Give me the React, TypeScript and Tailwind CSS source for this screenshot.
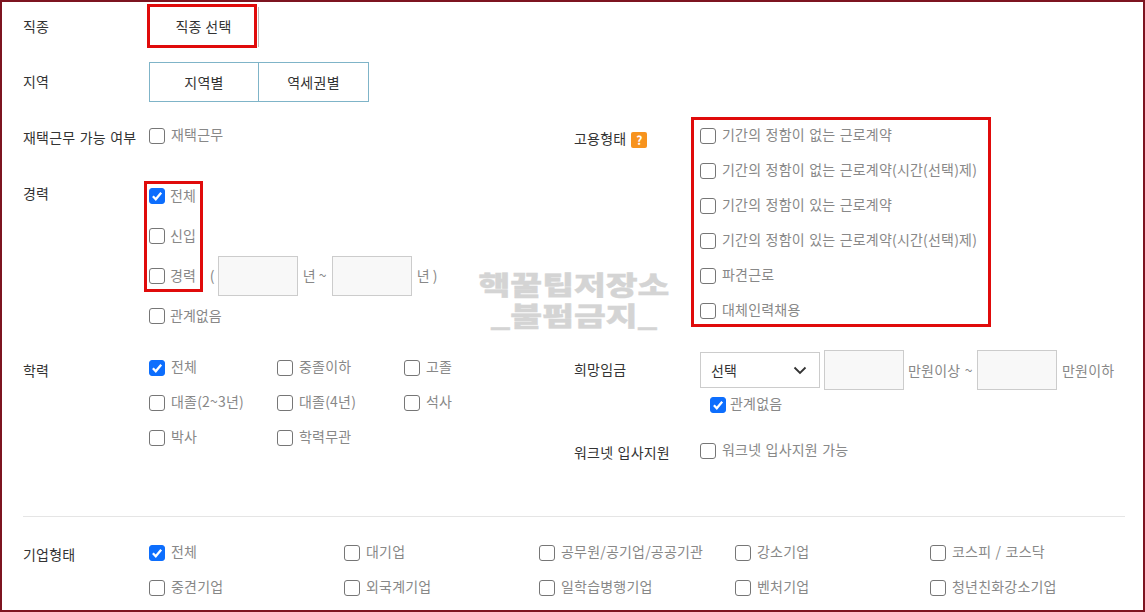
import React from 'react';

const FONT = "font-['Noto_Sans_CJK_KR','Noto_Sans',sans-serif]";

const Check = ({ label, checked = false, className = '', tight = false }: { label: string; checked?: boolean; className?: string; tight?: boolean }) => (
  <div className={`flex h-4 items-center ${className}`}>
    <span className={`flex h-4 w-4 shrink-0 items-center justify-center rounded-[3px] border ${checked ? 'border-[#0d6efd] bg-[#0d6efd]' : 'border-[#767676] bg-white'}`}>
      {checked && (
        <svg viewBox="0 0 16 16" className="h-4 w-4" fill="none">
          <path d="M3.3 8.3 6.6 11.8 12.8 4.4" stroke="white" strokeWidth="2.6" />
        </svg>
      )}
    </span>
    <span className={`whitespace-nowrap text-[14px] text-[#888] ${tight ? 'ml-[5px] -mt-[1px]' : 'ml-[6px] -mt-[3px] tracking-[0.2px] [word-spacing:1px]'}`}>{label}</span>
  </div>
);

const Label = ({ children, className = '' }: { children: React.ReactNode; className?: string }) => (
  <div className={`w-[126px] shrink-0 whitespace-nowrap text-[14px] leading-5 tracking-[0.2px] text-[#333] [word-spacing:1px] ${className}`}>{children}</div>
);

const Box = ({ className = '' }: { className?: string }) => (
  <span className={`block h-10 w-20 shrink-0 border border-[#ccc] bg-[#f8f8f8] ${className}`} />
);

const employment = [
  '기간의 정함이 없는 근로계약',
  '기간의 정함이 없는 근로계약(시간(선택)제)',
  '기간의 정함이 있는 근로계약',
  '기간의 정함이 있는 근로계약(시간(선택)제)',
  '파견근로',
  '대체인력채용',
];

const education: [string, boolean][] = [
  ['전체', true],
  ['중졸이하', false],
  ['고졸', false],
  ['대졸(2~3년)', false],
  ['대졸(4년)', false],
  ['석사', false],
  ['박사', false],
  ['학력무관', false],
];

const company: [string, boolean][] = [
  ['전체', true],
  ['대기업', false],
  ['공무원/공기업/공공기관', false],
  ['강소기업', false],
  ['코스피 / 코스닥', false],
  ['중견기업', false],
  ['외국계기업', false],
  ['일학습병행기업', false],
  ['벤처기업', false],
  ['청년친화강소기업', false],
];

export default function App() {
  return (
    <div className={`relative h-[612px] w-[1145px] overflow-hidden border-2 border-[#7d1420] bg-white pl-[21px] pr-[18px] pt-[5px] ${FONT}`}>
      {/* job type */}
      <div className="flex items-center">
        <Label className="-mt-[3px]">직종</Label>
        <div className="relative flex h-10 w-[110px] items-center justify-center border-r border-[#bbb] text-[14px] tracking-[0.3px] text-[#333]">
          <span className="-mt-[1px]">직종 선택</span>
          <span className="absolute -left-[2px] -top-[3px] h-[44px] w-[110px] border-[3px] border-[#e00b0b]" />
        </div>
      </div>

      {/* region */}
      <div className="mt-[15px] flex items-center">
        <Label className="-mt-[2px]">지역</Label>
        <div className="flex h-10 w-[220px] border border-[#7fb4c8] text-[14px] tracking-[0.3px] text-[#333]">
          <div className="flex w-[109px] items-center justify-center border-r border-[#7fb4c8]">지역별</div>
          <div className="flex flex-1 items-center justify-center">역세권별</div>
        </div>
      </div>

      <div className="flex">
        {/* left column */}
        <div className="w-[551px] shrink-0">
          <div className="mt-[26px] flex">
            <Label className="-mt-px">재택근무 가능 여부</Label>
            <Check label="재택근무" />
          </div>

          <div className="relative mt-[29px] flex">
            <Label className="mt-[7px]">경력</Label>
            <div>
              <div className="flex h-10 items-center"><Check label="전체" checked tight /></div>
              <div className="flex h-10 items-center"><Check label="신입" tight /></div>
              <div className="flex h-10 items-center text-[14px] text-[#888]">
                <Check label="경력" tight />
                <span className="ml-[14px] w-2 -mt-[2px]">(</span>
                <Box />
                <span className="ml-[5px] w-[29px] -mt-[2px] whitespace-nowrap">년 ~</span>
                <Box />
                <span className="ml-[5px] -mt-[2px] whitespace-nowrap">년 )</span>
              </div>
              <div className="flex h-10 items-center"><Check label="관계없음" tight /></div>
            </div>
            <span className="pointer-events-none absolute left-[121px] top-[5px] h-[111px] w-[59px] border-[3px] border-[#e00b0b]" />
          </div>

          <div className="mt-[24px] flex">
            <Label>학력</Label>
            <div className="grid grid-cols-[128px_127px_auto] gap-y-[19px]">
              {education.map(([label, checked]) => (
                <Check key={label} label={label} checked={checked} />
              ))}
            </div>
          </div>
        </div>

        {/* right column */}
        <div className="flex-1">
          <div className="relative mt-[26px] flex">
            <Label className="flex items-center self-start">
              고용형태
              <span className="ml-[5px] mt-[3px] flex h-4 w-4 items-center justify-center rounded-[2px] bg-[#f7931e] text-[12px] font-bold text-white">?</span>
            </Label>
            <div className="flex flex-col gap-[19px]">
              {employment.map(label => (
                <Check key={label} label={label} />
              ))}
            </div>
            <span className="pointer-events-none absolute left-[117px] -top-[11px] h-[210px] w-[300px] border-[3px] border-[#e00b0b]" />
          </div>

          <div className="mt-[31px] flex items-center">
            <Label className="-mt-[2px]">희망임금</Label>
            <div className="flex items-center text-[14px] tracking-[0.2px] text-[#888] [word-spacing:1px]">
              <div className="flex h-9 w-[120px] items-center justify-between border border-[#ccc] pl-[10px] pr-[11px] text-[#333]">
                <span>선택</span>
                <svg viewBox="0 0 16 16" className="h-4 w-4" fill="none">
                  <path d="M2.5 5.5l5.5 5.5 5.5-5.5" stroke="#333" strokeWidth="1.8" />
                </svg>
              </div>
              <Box className="ml-[4px]" />
              <span className="ml-[4px] w-[69px] whitespace-nowrap">만원이상 ~</span>
              <Box />
              <span className="ml-[5px] whitespace-nowrap">만원이하</span>
            </div>
          </div>
          <Check label="관계없음" checked className="ml-[136px] mt-[7px] [&>span:last-child]:ml-[4px]" />

          <div className="mt-[30px] flex">
            <Label className="-mt-px">워크넷 입사지원</Label>
            <Check label="워크넷 입사지원 가능" />
          </div>
        </div>
      </div>

      <div className="absolute left-[21px] right-[18px] top-[514px] border-t border-[#e5e5e5]" />

      {/* company type */}
      <div className="absolute left-[21px] top-[543px] flex">
        <Label className="-mt-px">기업형태</Label>
        <div className="grid grid-cols-[195px_195px_196px_195px_auto] gap-y-[19px]">
          {company.map(([label, checked]) => (
            <Check key={label} label={label} checked={checked} />
          ))}
        </div>
      </div>

      {/* watermark */}
      <div className="pointer-events-none absolute left-[476px] top-[266px] w-[192px] scale-x-[1.33] text-center text-[26px] font-black leading-[31px] text-[#d4d4d4] [-webkit-text-stroke:0.4px_#d4d4d4]">
        <div className="whitespace-nowrap">핵꿀팁저장소</div>
        <div className="whitespace-nowrap">_불펌금지_</div>
      </div>
    </div>
  );
}
